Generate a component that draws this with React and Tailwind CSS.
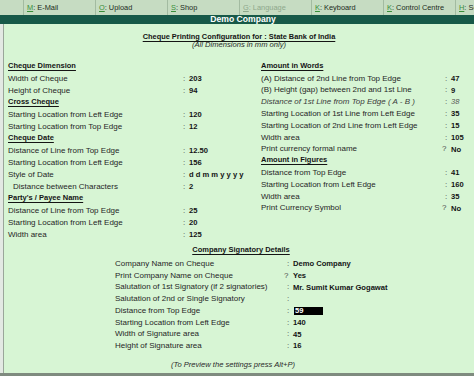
import React from "react";

const FONT = { fontFamily: '"Liberation Sans", Arial, sans-serif' };

const menu = [
  { k: "M", t: "E-Mail" },
  { k: "O", t: "Upload" },
  { k: "S", t: "Shop" },
  { k: "G", t: "Language", dim: true },
  { k: "K", t: "Keyboard" },
  { k: "K", t: "Control Centre" },
  { k: "H", t: "Se" },
];

const left = [
  { h: "Cheque Dimension" },
  { l: "Width of Cheque", v: "203" },
  { l: "Height of Cheque", v: "94" },
  { h: "Cross Cheque" },
  { l: "Starting Location from Left Edge", v: "120" },
  { l: "Starting Location from Top Edge", v: "12" },
  { h: "Cheque Date" },
  { l: "Distance of Line from Top Edge", v: "12.50" },
  { l: "Starting Location from Left Edge", v: "156" },
  { l: "Style of Date", v: "d d m m y y y y" },
  { l: "Distance between Characters", v: "2", indent: true },
  { h: "Party's / Payee Name" },
  { l: "Distance of Line from Top Edge", v: "25" },
  { l: "Starting Location from Left Edge", v: "20" },
  { l: "Width area", v: "125" },
];

const right = [
  { h: "Amount in Words" },
  { l: "(A) Distance of 2nd Line from Top Edge", v: "47" },
  { l: "(B) Height (gap) between 2nd and 1st Line", v: "9" },
  { l: "Distance of 1st Line from Top Edge ( A - B )", v: "38", italic: true },
  { l: "Starting Location of 1st Line from Left Edge", v: "35" },
  { l: "Starting Location of 2nd Line from Left Edge", v: "15" },
  { l: "Width area", v: "105" },
  { l: "Print currency formal name", v: "No", q: true },
  { h: "Amount in Figures" },
  { l: "Distance from Top Edge", v: "41" },
  { l: "Starting Location from Left Edge", v: "160" },
  { l: "Width area", v: "35" },
  { l: "Print Currency Symbol", v: "No", q: true },
];

const sign = [
  { l: "Company Name on Cheque", v: "Demo Company" },
  { l: "Print Company Name on Cheque", v: "Yes", q: true },
  { l: "Salutation of 1st Signatory (if 2 signatories)", v: "Mr. Sumit Kumar Gogawat" },
  { l: "Salutation of 2nd or Single Signatory", v: "" },
  { l: "Distance from Top Edge", v: "59", hl: true },
  { l: "Starting Location from Left Edge", v: "140" },
  { l: "Width of Signature area", v: "45" },
  { l: "Height of Signature area", v: "16" },
];

function Rows({ rows, labelW, rowH }) {
  return (
    <div className="flex flex-col">
      {rows.map((r, i) =>
        r.h ? (
          <div key={i} className="flex items-start" style={{ height: rowH }}>
            <span className="text-[7.5px] font-bold text-[#141414] underline underline-offset-[1.5px] decoration-[1px] leading-[10px]">
              {r.h}
            </span>
          </div>
        ) : (
          <div key={i} className="flex items-center" style={{ height: rowH }}>
            <span
              className={
                "shrink-0 whitespace-nowrap " +
                (r.italic ? "italic text-[#3a3a3a] " : "text-[#262626] ") +
                (r.indent ? "pl-[5px]" : "")
              }
              style={{ width: labelW }}
            >
              {r.l}
            </span>
            <span className={"shrink-0 w-[6px] text-[#4a4a4a] " + (r.q ? "-ml-[3px] w-[9px]" : "")}>
              {r.q ? "?" : ":"}
            </span>
            {r.hl ? (
              <span className="ml-[1px] w-[29px] h-[8px] bg-black text-white text-[7.6px] font-bold leading-[8px] pl-[1px]">
                {r.v}
              </span>
            ) : (
              <span
                className={
                  "whitespace-nowrap text-[7.6px] " +
                  (r.italic ? "italic text-[#555]" : "font-bold text-[#141414]")
                }
              >
                {r.v}
              </span>
            )}
          </div>
        )
      )}
    </div>
  );
}

export default function App() {
  return (
    <div className="w-[474px] h-[376px] flex flex-col overflow-hidden bg-[#d7f5d4]" style={FONT}>
      {/* menu bar */}
      <div className="h-[15px] flex bg-[#c6dcc2] text-[7.4px] text-[#1c2c1c]">
        <div className="w-[23px] shrink-0"></div>
        {menu.map((m, i) => (
          <div
            key={i}
            className={
              "w-[72px] shrink-0 flex items-center border-l border-[#a3bba1] pl-[3px] whitespace-nowrap overflow-hidden " +
              (m.dim ? "text-[#8ea88c]" : "")
            }
          >
            <span className={"underline " + (m.dim ? "text-[#8ea88c]" : "text-[#3a8f3a]")}>{m.k}</span>
            <span>: {m.t}</span>
          </div>
        ))}
      </div>
      {/* title bar */}
      <div className="h-[9px] bg-[#175948] flex items-center justify-center pl-[12px] text-[8.6px] font-bold text-white leading-none">
        Demo Company
      </div>
      {/* main */}
      <div className="flex-1 flex">
        <div className="w-[3px] bg-[#e3e9e3]"></div>
        <div className="w-[1px] bg-[#9aa69a]"></div>
        <div className="flex-1 flex flex-col text-[8px] leading-none">
          <div className="pt-[9px] flex flex-col items-center">
            <div className="h-[8px] text-[7.4px] font-bold text-[#141414] underline underline-offset-[1.5px]">
              Cheque Printing Configuration for : State Bank of India
            </div>
            <div className="h-[8px] italic text-[7.6px] text-[#2a2a2a]">(All Dimensions in mm only)</div>
          </div>
          <div className="mt-[12px] flex">
            <div className="w-[257px] pl-[4px]">
              <Rows rows={left} labelW={175} rowH={12} />
            </div>
            <div>
              <Rows rows={right} labelW={184} rowH={11.8} />
            </div>
          </div>
          <div className="mt-[4px] flex justify-center pl-[4px]">
            <span className="text-[7.5px] font-bold text-[#141414] underline underline-offset-[1.5px] leading-[10px] h-[13px]">
              Company Signatory Details
            </span>
          </div>
          <div className="pl-[111px]">
            <Rows rows={sign} labelW={172} rowH={11.75} />
          </div>
          <div className="mt-[9px] flex justify-center pr-[12px] italic text-[7.6px] text-[#2a2a2a]">
            (To Preview the settings press Alt+P)
          </div>
        </div>
      </div>
      <div className="h-[3px] bg-[#7f8b7f]"></div>
    </div>
  );
}
